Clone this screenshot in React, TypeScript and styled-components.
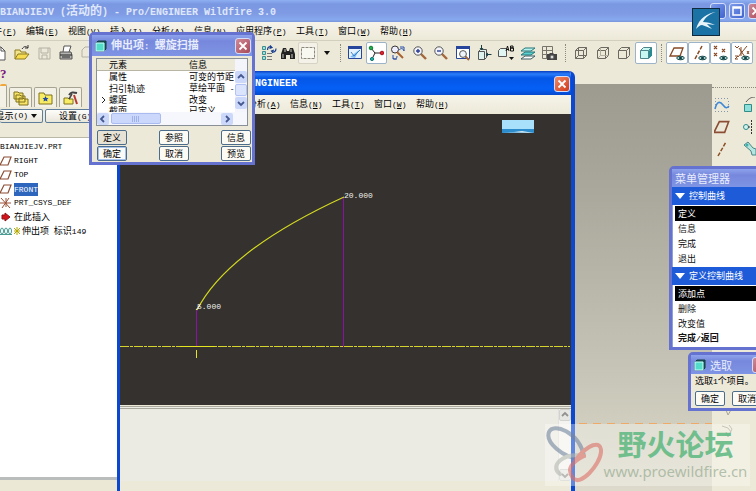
import React from "react";
import styled, { createGlobalStyle, css } from "styled-components";

const cjk = `"Noto Sans CJK SC", sans-serif`;
const mono = `"Liberation Mono", "Noto Sans CJK SC", monospace`;

const GlobalStyle = createGlobalStyle`
  * { box-sizing: border-box; }
  body { margin: 0; overflow: hidden; background: #ece9d8; }
  button { font: inherit; color: inherit; padding: 0; margin: 0; border: 0; background: none; }
  ul { list-style: none; margin: 0; padding: 0; }
  svg { display: block; flex: none; }
`;

/* ---------- text ---------- */

const Latin = styled.span<{ $size: number }>`
  font-family: ${mono};
  font-size: ${(p) => p.$size}px;
`;

const Txt = ({ children, size = 8 }: { children: string; size?: number }) => (
  <>
    {children.split(/([\x20-\x7e]+)/).map((part, i) =>
      i % 2 ? (
        <Latin key={i} $size={size}>
          {part}
        </Latin>
      ) : (
        part
      )
    )}
  </>
);

/* ---------- application frame ---------- */

const App_ = styled.div`
  position: relative;
  display: flex;
  flex-direction: column;
  height: 100vh;
  overflow: hidden;
  background: #ece9d8;
  font: 9px/12px ${cjk};
  color: #000;
  white-space: pre;
`;

const TitleBar = styled.header`
  display: flex;
  align-items: center;
  justify-content: space-between;
  height: 22px;
  flex: none;
  background: linear-gradient(#8fb0f2, #7a97e2 4px, #7f9be4 14px, #86a9ee 20px, #7892d8);
  color: #dfe7fb;
  font-size: 12px;
  font-weight: bold;
`;

const WindowButtons = styled.div`
  display: flex;
  gap: 3px;
  margin-right: -8px;
`;

const frameColors = {
  blue: "linear-gradient(135deg, #7d9bea, #3f63d0)",
  rose: "linear-gradient(135deg, #d08a98, #a84858)",
  red: "linear-gradient(135deg, #f08a68, #d23a18)",
};

const WinButton = styled.button<{ $tone: keyof typeof frameColors }>`
  display: flex;
  align-items: center;
  justify-content: center;
  width: 16px;
  height: 16px;
  flex: none;
  border: 1px solid #d5def8;
  border-radius: 3px;
  background: ${(p) => frameColors[p.$tone]};
`;

const MenuBar = styled.nav<{ $inset: number }>`
  display: flex;
  align-items: center;
  height: 18px;
  flex: none;
  padding-left: ${(p) => p.$inset}px;
  background: linear-gradient(#f6f4ea, #ece9d8);
`;

const MainMenu = styled(MenuBar)`
  margin-left: -16px;
`;

const GraphMenu = styled(MenuBar)`
  height: 19px;
`;

const MenuItem = styled.button<{ $wide?: boolean }>`
  width: ${(p) => (p.$wide ? 60 : 42)}px;
  flex: none;
  text-align: left;
`;

const Key = styled.u`
  text-underline-offset: 1px;
`;

const menuEntry = (label: string, key: string, wide = false) => (
  <MenuItem key={label} $wide={wide}>
    {label}
    <Latin $size={8}>
      (<Key>{key}</Key>)
    </Latin>
  </MenuItem>
);

const ToolBar = styled.div`
  display: grid;
  grid-template-columns: 259px 78px 7px 216px 10px 87px 9px 87px;
  align-items: center;
  height: 24px;
  flex: none;
  border-top: 1px solid #d2cfbe;
`;

const ToolGroup = styled.div<{ $size?: number }>`
  display: grid;
  grid-auto-flow: column;
  grid-auto-columns: ${(p) => (p.$size ? p.$size + "px" : "1fr")};
  align-items: center;
`;

const FileGroup = styled(ToolGroup)`
  margin-left: -11px;
`;

const Tool = styled.button<{ $on?: boolean }>`
  display: flex;
  align-items: center;
  justify-content: center;
  height: 22px;
  min-width: 0;
  border-radius: 2px;
  ${(p) =>
    p.$on &&
    css`
      background: #fff;
      border: 1px solid #9db3c8;
    `}
`;

const MarqueeTool = styled(Tool)`
  background: #f3f1e8;
  border: 1px solid #d6d3c4;
`;

const Grip = styled.div`
  justify-self: center;
  width: 0;
  height: 18px;
  border-left: 1px dotted #8c8a7c;
`;

const HelpRow = styled.div`
  display: flex;
  align-items: center;
  height: 20px;
  flex: none;
  color: #7b1481;
  font: bold 13px/16px "Liberation Serif", serif;
`;

const Workspace = styled.main`
  display: grid;
  grid-template-columns: 117px 1fr 44px;
  flex: 1;
  min-height: 0;
`;

/* ---------- model tree ---------- */

const Navigator = styled.aside`
  display: flex;
  flex-direction: column;
  min-width: 0;
`;

const Tabs = styled.div`
  display: flex;
  align-items: flex-end;
  gap: 2px;
  height: 23px;
  flex: none;
`;

const Tab = styled.button<{ $active?: boolean }>`
  display: flex;
  align-items: center;
  justify-content: center;
  width: ${(p) => (p.$active ? 7 : 23)}px;
  height: ${(p) => (p.$active ? 23 : 20)}px;
  border: 1px solid #a5a394;
  border-bottom: 0;
  border-radius: 2px 2px 0 0;
  background: #f3f1e6;
  ${(p) =>
    p.$active &&
    css`
      border-left: 0;
      border-top: 2px solid #f0a63a;
    `}
`;

const NavButtons = styled.div`
  display: flex;
  gap: 2px;
  padding-top: 2px;
  height: 30px;
  flex: none;
`;

const NavButton = styled.button<{ $first?: boolean }>`
  display: flex;
  align-items: center;
  gap: 3px;
  width: ${(p) => (p.$first ? 43 : 60)}px;
  height: 14px;
  padding-left: ${(p) => (p.$first ? 0 : 13)}px;
  border: 1px solid #5e7d9a;
  border-radius: 2px;
  background: linear-gradient(#fdfdfa, #e9e6da);
  ${(p) => p.$first && css`border-left: 0;`}
`;

const Clip = styled.span`
  display: flex;
  justify-content: flex-end;
  width: 28px;
  overflow: hidden;
`;

const Tree = styled.ul`
  flex: 1;
  && { padding-top: 2px; }
  border-top: 1px solid #b9b7a8;
  border-bottom: 3px solid #b9bdbb;
  background: #fff;
`;

const TreeRow = styled.li`
  display: flex;
  align-items: center;
  height: 14px;
  gap: 2px;
`;

const Selected = styled.span`
  background: #2f66bd;
  color: #fff;
`;

const NavFooter = styled.div`
  height: 11px;
  flex: none;
  background: #ece8d6;
`;

/* ---------- main viewport ---------- */

const Viewport = styled.section`
  display: flex;
  flex-direction: column;
  background: linear-gradient(#9d9b90, #a9a79b 25%, #c6c4b6 70%, #dddacb);
`;

const Datum = styled.div`
  height: 1px;
  flex: none;
  margin-top: 339px;
  background: repeating-linear-gradient(90deg, #eeaa66 0 8px, transparent 8px 14px);
`;

const SideTools = styled.aside`
  padding-top: 3px;
  background: #ece9d8;
`;

const SideGrid = styled.div`
  display: grid;
  grid-template-columns: 20px 20px;
  grid-auto-rows: 22px;
  column-gap: 9px;
  align-items: center;
  border-top: 1px dotted #8c8a7c;
  padding-top: 6px;
`;

const LowerTools = styled.div`
  display: flex;
  flex-direction: column;
  gap: 8px;
  padding: 242px 0 0 9px;
`;

/* ---------- graph window ---------- */

const GraphWindow = styled.section`
  position: absolute;
  top: 71px;
  bottom: 0;
  left: 117px;
  width: 458px;
  display: flex;
  flex-direction: column;
  border: solid #0b47cf;
  border-width: 0 4px 0 3px;
  border-radius: 6px 6px 0 0;
  background: #ece9d8;
  overflow: hidden;
`;

const GraphTitle = styled.header`
  display: flex;
  align-items: center;
  justify-content: space-between;
  height: 24px;
  flex: none;
  padding: 2px 1px 0 105px;
  background: linear-gradient(#0a3fc0, #2a7dfa 3px, #0556e6 7px, #0560f6 18px, #0648cc);
  color: #fff;
  font: bold 10px/12px ${mono};
`;

const Canvas = styled.div`
  height: 291px;
  flex: none;
  background: #34312e;
`;

const PlotText = styled.text`
  fill: #f0f0ea;
  font: 8px ${mono};
`;

const Messages = styled.div`
  display: flex;
  justify-content: flex-end;
  height: 75px;
  flex: none;
  margin-top: 1px;
  border-top: 3px double #aaa79d;
  background: #ebeae3;
`;

const FadedScroll = styled.div`
  display: flex;
  flex-direction: column;
  justify-content: space-between;
  width: 13px;
  background: #fbfaf7;
  border-left: 1px solid #dddbd0;
  filter: grayscale(1);
  opacity: 0.6;
`;

/* ---------- floating tool dialogs ---------- */

const Dialog = styled.section`
  position: absolute;
  display: flex;
  flex-direction: column;
  border: 3px solid #6672cf;
  border-radius: 5px 5px 0 0;
  background: #ece9d8;
`;

const ElementDialog = styled(Dialog)`
  left: 89px;
  top: 32px;
  width: 166px;
`;

const MenuManager = styled(Dialog)`
  left: calc(100vw - 87px);
  top: 166px;
  width: 120px;
`;

const SelectDialog = styled(Dialog)`
  left: calc(100vw - 68px);
  top: 352px;
  width: 84px;
`;

const DialogTitle = styled.header<{ $h: number }>`
  display: flex;
  align-items: center;
  gap: 4px;
  height: ${(p) => p.$h}px;
  padding-left: 3px;
  background: linear-gradient(#8da3ec, #7788dc 6px, #7e94e4);
  color: #e8edfc;
  & > button { margin-left: auto; margin-right: 1px; }
`;

const TitleText = styled.span<{ $bold?: boolean }>`
  font-size: 11px;
  font-weight: ${(p) => (p.$bold ? "bold" : "normal")};
`;

const ListFrame = styled.div`
  margin: 2px 4px 0;
  height: 68px;
  border: 1px solid #8a9097;
  background: #fff;
`;

const ListBody = styled.div`
  display: grid;
  grid-template-columns: 1fr 12px;
  height: 53px;
`;

const TableClip = styled.div`
  overflow: hidden;
`;

const Elements = styled.table`
  border-collapse: collapse;
  table-layout: fixed;
  width: 150px;
  line-height: 11px;
  th, td { padding: 0; text-align: left; font-weight: normal; height: 11px; }
  th { background: #ece9d8; border-bottom: 1px solid #b8b5a5; }
  tr > :first-child { width: 12px; }
  tr > :nth-child(2) { width: 80px; }
  td:first-child svg { margin-left: 2px; }
`;

const VScroll = styled.div`
  display: flex;
  flex-direction: column;
  gap: 1px;
  padding-top: 12px;
  background: #f4f4fb;
`;

const HScroll = styled.div`
  display: flex;
  align-items: center;
  gap: 2px;
  height: 13px;
  padding-right: 14px;
  background: #f6f7fc;
`;

const ScrollKey = styled.button<{ $fill?: boolean }>`
  display: flex;
  align-items: center;
  justify-content: center;
  width: 12px;
  height: 12px;
  border-radius: 2px;
  background: #ccd8fa;
  ${(p) => p.$fill && css`background: #dbe4fd; border: 1px solid #b3c3f4;`}
`;

const HThumb = styled.div`
  display: flex;
  align-items: center;
  justify-content: center;
  width: 50px;
  height: 11px;
  margin-right: auto;
  border: 1px solid #a9bbf0;
  border-radius: 2px;
  background: #ccd8fb;
`;

const ButtonGrid = styled.div`
  display: grid;
  grid-template-columns: repeat(3, 30px);
  justify-content: space-between;
  row-gap: 1px;
  padding: 4px 1px 1px 5px;
`;

const PushButton = styled.button<{ $primary?: boolean; $flat?: boolean }>`
  width: 30px;
  height: 15px;
  flex: none;
  border: 1px solid #4c6c8c;
  border-radius: 2px;
  background: ${(p) => (p.$flat ? "#e6e3d6" : "#fbfaf5")};
  line-height: 12px;
  ${(p) => p.$primary && css`box-shadow: inset 0 0 0 1px #a5c3ee;`}
`;

const Section = styled.h2`
  display: flex;
  align-items: center;
  gap: 4px;
  height: 18px;
  margin: 0;
  padding-left: 3px;
  background: #1e5bd8;
  color: #fff;
  font: 9px/12px ${cjk};
`;

const Choices = styled.div`
  display: flex;
  flex-direction: column;
  height: 62px;
  padding: 1px 0 0 2px;
  border-left: 1px solid #8ea0d8;
  background: #fff;
`;

const Choice = styled.button<{ $on?: boolean; $strong?: boolean }>`
  height: 15px;
  padding-left: 3px;
  text-align: left;
  background: ${(p) => (p.$on ? "#000" : "transparent")};
  color: ${(p) => (p.$on ? "#fff" : "#111")};
  font-weight: ${(p) => (p.$strong ? "bold" : "normal")};
`;

const SelectBody = styled.div`
  display: flex;
  flex-wrap: wrap;
  gap: 3px 7px;
  width: 84px;
  padding: 1px 0 2px 4px;
`;

const Prompt = styled.p`
  width: 100%;
  margin: 0;
`;

/* ---------- overlays ---------- */

const Bird = styled.div`
  position: absolute;
  right: 36px;
  top: 8px;
  width: 28px;
  height: 28px;
  border: 1px solid #0e2a3c;
  background: #1b73a5;
`;

const Watermark = styled.div`
  position: absolute;
  right: 6px;
  bottom: 5px;
  display: flex;
  width: 205px;
  height: 62px;
  background: rgba(255, 255, 250, 0.35);
`;

const Brand = styled.div`
  display: flex;
  flex-direction: column;
  align-items: center;
  width: 145px;
`;

const BrandName = styled.strong`
  color: rgba(92, 184, 128, 0.85);
  font: bold 29px/38px ${cjk};
`;

const BrandUrl = styled.a`
  color: rgba(150, 170, 145, 0.7);
  font: 15px/18px "Noto Sans", sans-serif;
  text-decoration: none;
`;

/* ---------- icons ---------- */

const Icon = ({ children, w = 16, h = 16 }: { children: React.ReactNode; w?: number; h?: number }) => (
  <svg width={w} height={h} viewBox={`0 0 ${w} ${h}`} fill="none" stroke="#555" strokeWidth="1">
    {children}
  </svg>
);

const Cross = () => (
  <Icon w={10} h={10}>
    <path d="M1.5 1.5l7 7M8.5 1.5l-7 7" stroke="#fff" strokeWidth="1.8" />
  </Icon>
);
const DocIcon = () => (
  <Icon>
    <path d="M3 2h6l4 4v9H3z" fill="#fff" />
    <path d="M9 2v4h4" />
  </Icon>
);
const OpenIcon = () => (
  <Icon>
    <path d="M1 14V5h5l1 2h5v2" fill="#f2e48a" stroke="#8d7b1e" />
    <path d="M1 14l3-5h11l-4 5z" fill="#f8dc50" stroke="#8d7b1e" />
    <path d="M8 4c2-3 4-3 6-1M14 0v3h-3" stroke="#333" />
  </Icon>
);
const SaveIcon = () => (
  <Icon>
    <path d="M3 3h11v11H3zM5 3v5h7V3M6 14v-4h5v4" stroke="#b4b1a4" />
  </Icon>
);
const PrintIcon = () => (
  <Icon>
    <path d="M5 7l1-6h7l-2 6" fill="#fff" />
    <path d="M2 7h11l1 3v4H2z" fill="#b4b4b0" />
    <path d="M2 10h12M4 12h8" stroke="#222" />
  </Icon>
);
const FaintIcon = () => (
  <Icon>
    <path d="M2 12V5l3-3h8v10z" stroke="#b4b1a4" />
  </Icon>
);
const RegenIcon = () => (
  <Icon>
    <path d="M1.5 1.5h3v3h-3zM1.5 6.5h3v3h-3zM1.5 11.500h3v3h-3z" fill="#9fe0d8" stroke="#3f8f90" />
    <path d="M6 8.500h5M6 11.500h5M6 14.500h5" stroke="#777" />
    <path d="M6.500 5c0-3 2-4 4-2.500M15 3.500c0 3-2 4-4 3M9 .5l2 2-2.500 1M12 8l-1.500-2 2.500-1" stroke="#173d91" strokeWidth="1.2" />
  </Icon>
);
const BinocularIcon = () => (
  <Icon>
    <path d="M1 14V9l2-6h3l1 3h2l1-3h3l2 6v5h-5v-4H6v4z" fill="#222" stroke="none" />
    <path d="M3 13V9M5 4v3M12 13V9M11 4v3" stroke="#c8c8c0" />
  </Icon>
);
const MarqueeIcon = () => (
  <Icon>
    <path d="M1.5 2.5h13v11h-13z" fill="#f8f7f0" stroke="#8b897c" strokeDasharray="3 1" />
  </Icon>
);
const ArrowIcon = () => (
  <Icon w={6} h={4}>
    <path d="M0 0h6L3 4z" fill="#111" stroke="none" />
  </Icon>
);
const RepaintIcon = () => (
  <Icon>
    <path d="M1.5 1.500h13v12h-13z" fill="#e4f1ff" stroke="#27459b" />
    <path d="M1 2.5h14" stroke="#27459b" strokeWidth="3" />
    <path d="M3 12l9-7-4 8z" fill="#7dbcf2" stroke="none" />
    <path d="M4 7l3 4 6-6" stroke="#3c82c8" />
  </Icon>
);
const SpinIcon = () => (
  <Icon>
    <path d="M3 3l4 5-3 6M7 8h7" stroke="#222" />
    <circle cx="3" cy="3" r="1.8" fill="#1fae4c" stroke="#0f7c33" />
    <circle cx="4" cy="14" r="1.6" fill="#20b4a8" stroke="#0c7c76" />
    <circle cx="14" cy="8" r="1.8" fill="#e0202c" stroke="#a40f1c" />
  </Icon>
);
const OrientIcon = () => (
  <Icon>
    <circle cx="5" cy="4.500" r="3.500" fill="#eef" stroke="#333" />
    <path d="M7 7l6 6" stroke="#a8622f" strokeWidth="2" />
    <path d="M10 2h4v4M9 5c2-2 4-2 5 1M3 10v4h4M3 13c2 2 4 1 4-2" stroke="#274da8" />
  </Icon>
);
const Zoom = ({ plus }: { plus?: boolean }) => (
  <Icon>
    <path d="M9 9l5 5" stroke="#a4673c" strokeWidth="2.4" />
    <circle cx="6" cy="6" r="4.2" fill="#f3f4fb" stroke="#555" />
    <path d={plus ? "M4 6h4M6 4v4" : "M4 6h4"} stroke="#2c3b92" strokeWidth="1.4" />
  </Icon>
);
const RefitIcon = () => (
  <Icon>
    <path d="M1.500 1.500h13v12h-13z" fill="#fff" stroke="#27459b" />
    <path d="M1 2.500h14" stroke="#27459b" strokeWidth="3" />
    <path d="M10 11l4 4" stroke="#a4673c" strokeWidth="2" />
    <circle cx="8" cy="9" r="3.4" fill="#eef4fb" stroke="#555" />
  </Icon>
);
const ViewIcon = () => (
  <Icon>
    <path d="M2.500 6.500h6v8h-6zM2.500 6.500l2-2h6v8l-2 2" fill="#dff3ef" />
    <path d="M5.500 0v5M4 3l1.500 2L7 3M15.500 9.500H10M12 8l-2 1.500 2 1.500" stroke="#173f45" />
  </Icon>
);
const NamedIcon = () => (
  <Icon>
    <path d="M.5 5.500l2-2h6v8h-8z" fill="#e1f5f2" />
    <path d="M8 6l1.500-5L11 6M8.500 4.500h2M12.500 1h2.500v2h-2.500zM12.500 3h3v3h-3V1" stroke="#111" />
    <path d="M11 12h5l-2.500 3z" fill="#111" stroke="none" />
  </Icon>
);
const LayersIcon = () => (
  <Icon>
    <path d="M1 14l4-3h10l-4 3z" fill="#fff" stroke="#3b5b60" />
    <path d="M1 10l4-3h10l-4 3z" fill="#5ad0d0" stroke="#25777a" />
    <path d="M1 6l4-3h10l-4 3z" fill="#b8f2ee" stroke="#25777a" />
  </Icon>
);
const TableIcon = () => (
  <Icon>
    <path d="M1.500 1.500h10v12h-10zM1 5.500h11M1 9.500h11M5.500 1v12" stroke="#77756b" />
    <path d="M6 9h2l1-1h3l1 1h3v6H6z" fill="#444" stroke="none" />
    <circle cx="11" cy="12" r="2" fill="#ddd" />
  </Icon>
);
const Cube = ({ mode }: { mode: "wire" | "hidden" | "none" | "shade" }) => (
  <Icon>
    <path
      d="M2.500 5.500l3-3h8v8l-3 3h-8zM2.500 5.500h8v8M10.500 5.500l3-3"
      fill={mode === "shade" ? "#c8f6f0" : "none"}
      stroke={mode === "shade" ? "#4d8589" : "#6c6a60"}
    />
    {mode === "shade" && <path d="M11 5.500l3-3v8l-3 3z" fill="#278b91" stroke="none" />}
    {mode === "wire" && <path d="M5.500 2.500v8h8M5.500 10.500l-3 3" stroke="#6c6a60" />}
    {mode === "hidden" && <path d="M5.500 2.500v8h8M5.500 10.500l-3 3" stroke="#b1aea0" />}
  </Icon>
);
const Datums = ({ kind }: { kind: "plane" | "axis" | "point" | "csys" }) => (
  <Icon>
    {kind === "plane" && <path d="M1 11l4-8h9l-3 8z" stroke="#874a24" strokeWidth="1.3" />}
    {kind === "axis" && <path d="M4 14L11 1" stroke="#874a24" strokeWidth="1.5" strokeDasharray="4 1.500" />}
    {kind === "point" && (
      <path d="M2 1l3 3M5 1L2 4M10 4l3 3M13 4l-3 3M2 8l3 3M5 8l-3 3" stroke="#874a24" strokeWidth="1.2" />
    )}
    {kind === "csys" && (
      <path d="M5 3l6 9M13 1L4 12M7 2v9M1 1l2 2 2-2M13 6l2 3M15 6l-2 3M1 11h3l-3 3h3" stroke="#874a24" />
    )}
    <ellipse cx="11.500" cy="13" rx="3.800" ry="1.800" fill="#a9d4d0" stroke="#1e4d4d" />
    <circle cx="11.500" cy="13" r="1.500" fill="#0d3f42" stroke="none" />
  </Icon>
);
const Plane = ({ w = 12 }: { w?: number }) => (
  <svg width={w} height={w} viewBox="0 0 12 12" fill="none" stroke="#8b4d33" strokeWidth="1.2">
    <path d="M0 10l4-8h7l-3 8z" />
  </svg>
);
const CsysIcon = () => (
  <Icon w={12} h={12}>
    <path d="M1 1l9 10M9 1L2 11M0 6h11M6 1v9" stroke="#9a5136" />
  </Icon>
);
const RedArrow = () => (
  <Icon w={12} h={12}>
    <path d="M2 4h3V2l5 4-5 4V8H2z" fill="#d3141c" stroke="#901015" />
  </Icon>
);
const HelixIcon = () => (
  <Icon w={12} h={12}>
    <path d="M0 9.500h12" stroke="#4a9a92" />
    <ellipse cx="2" cy="6" rx="1.500" ry="3" stroke="#4a9a92" />
    <ellipse cx="6" cy="6" rx="1.500" ry="3" stroke="#4a9a92" />
    <ellipse cx="10" cy="6" rx="1.500" ry="3" stroke="#4a9a92" />
  </Icon>
);
const SparkIcon = () => (
  <Icon w={6} h={8}>
    <path d="M0 1l6 6M6 1L0 7M3 0v8M0 4h6" stroke="#b4a800" />
  </Icon>
);
const FoldersIcon = () => (
  <Icon>
    <path d="M1 2h4l1 1h4v6H1zM3 5h4l1 1h4v6H3zM6 8h4l1 1h4v6H6z" fill="#f6e468" stroke="#80701c" />
  </Icon>
);
const FavIcon = () => (
  <Icon>
    <path d="M1 3h5l1 2h7v9H1z" fill="#f8ec64" stroke="#80701c" />
    <path d="M7.500 6l1 2h2l-1.500 1.500.5 2-2-1-2 1 .5-2L4.500 8h2z" fill="#234aa0" stroke="none" />
  </Icon>
);
const ToolsIcon = () => (
  <Icon>
    <path d="M1 8h4l1 1h4v5H1z" fill="#f8ec64" stroke="#80701c" />
    <path d="M6 5c2-3 4-3 8-2" stroke="#444" strokeWidth="2" />
    <path d="M9 4L6 9" stroke="#444" strokeWidth="1.500" />
    <path d="M11 5l3 9" stroke="#b93a2c" strokeWidth="2" />
  </Icon>
);
const BoxIcon = () => (
  <Icon w={12} h={12}>
    <path d="M1 3l2-2h8v8l-2 2H1z" fill="#17575c" stroke="#123b40" />
    <path d="M1 3h8v8H1z" fill="#54dccb" stroke="#c9fff6" />
  </Icon>
);
const Chevron = ({ d, thin }: { d: "up" | "down" | "left" | "right"; thin?: boolean }) => {
  const paths = { up: "M1 5l3-3 3 3", down: "M1 3l3 3 3-3", left: "M5 1L2 4l3 3", right: "M3 1l3 3-3 3" };
  return (
    <Icon w={8} h={8}>
      <path d={paths[d]} stroke={thin ? "#222" : "#43598f"} strokeWidth={thin ? "1" : "1.8"} />
    </Icon>
  );
};
const SectionArrow = () => (
  <Icon w={10} h={6}>
    <path d="M0 0h10L5 6z" fill="#fff" stroke="none" />
  </Icon>
);
const CurveIcon = () => (
  <Icon>
    <path d="M1 1.500h14M1 14.500h14M1.500 4v9M14.500 4v9" stroke="#8797aa" strokeDasharray="1 2" />
    <path d="M1 12c2-8 5-8 8-4s4 3 6 1" stroke="#3f87d6" strokeWidth="1.6" />
  </Icon>
);
const AxisIcon = () => (
  <Icon>
    <path d="M4 15L12 1" stroke="#8b4d23" strokeWidth="1.5" strokeDasharray="4 1.500" />
  </Icon>
);
const DragIcon = () => (
  <Icon>
    <path d="M1.500 7.500h7v7h-7z" fill="#8fe0da" stroke="#2f8c89" />
    <path d="M3 5c3-4 6-5 9-5" stroke="#555" />
  </Icon>
);
const MirrorIcon = () => (
  <Icon>
    <circle cx="3" cy="8" r="2.500" fill="#d4f3ef" stroke="#2f8c89" />
    <path d="M5 8h4M8.500 1v14" stroke="#333" strokeDasharray="2 1" />
  </Icon>
);
const MoveIcon = () => (
  <Icon>
    <path d="M1 4l4-3 5 6 3 1v6H9l-1-4z" fill="#b4e6e0" stroke="#4d8589" />
    <circle cx="4" cy="4" r="1.500" fill="#3fb0a8" stroke="none" />
  </Icon>
);
const GhostIcon = () => (
  <Icon w={14} h={14}>
    <path d="M1 2l6 2 3 4-3 5-2-5M8 1l3 4-2 4" stroke="#a9a698" />
  </Icon>
);

const Plot = () => (
  <svg width="450" height="291" viewBox="0 0 450 291" fill="none">
    <path d="M382 6h32v13h-32z" fill="#a8e0fb" />
    <path d="M382 15h32v4h-32z" fill="#2d8ccb" />
    <path d="M382 18h12l8-1 12 2z" fill="#d7eaf4" />
    <path d="M76 196h1v37h-1zM223 83h1v150h-1z" fill="#8c12a6" />
    <path d="M0 232.500h450" stroke="#d6d42c" strokeDasharray="9 1 3 1" />
    <path d="M60 232.500h35M76.500 236v8" stroke="#e6e620" />
    <path d="M77 196C98 155 148 118 224 83" stroke="#d2d820" strokeWidth="1.200" />
    <path d="M76 196l4-5" stroke="#f0f0ea" />
    <PlotText x="224" y="84">20.000</PlotText>
    <PlotText x="77" y="195">5.000</PlotText>
  </svg>
);

/* ---------- data ---------- */

const mainMenu: [string, string, boolean?][] = [
  ["文件", "F"], ["编辑", "E"], ["视图", "V"], ["插入", "I"], ["分析", "A"],
  ["信息", "N"], ["应用程序", "P", true], ["工具", "T"], ["窗口", "W"], ["帮助", "H"],
];
const graphMenu: [string, string][] = [
  ["文件", "F"], ["编辑", "E"], ["视图", "V"], ["分析", "A"], ["信息", "N"], ["工具", "T"], ["窗口", "W"], ["帮助", "H"],
];
const elements = [["属性", "可变的节距"], ["扫引轨迹", "草绘平面 -"], ["螺距", "改变"], ["截面", "已定义"]];

export default function App() {
  return (
    <App_ lang="zh-CN">
      <GlobalStyle />
      <TitleBar>
        <span><Txt size={10}>BIANJIEJV (活动的) - Pro/ENGINEER Wildfire 3.0</Txt></span>
        <WindowButtons>
          <WinButton $tone="blue" aria-label="最小化">
            <Icon w={10} h={10}><path d="M1 8h5" stroke="#fff" strokeWidth="2" /></Icon>
          </WinButton>
          <WinButton $tone="blue" aria-label="最大化">
            <Icon w={10} h={10}><path d="M1 1h8v8H1zM1 2h8" stroke="#fff" strokeWidth="1.500" /></Icon>
          </WinButton>
          <WinButton $tone="rose" aria-label="关闭"><Cross /></WinButton>
        </WindowButtons>
      </TitleBar>
      <MainMenu $inset={0}>{mainMenu.map(([l, k, w]) => menuEntry(l, k, w))}</MainMenu>
      <ToolBar>
        <FileGroup $size={22}>
          <Tool aria-label="新建"><DocIcon /></Tool>
          <Tool aria-label="打开"><OpenIcon /></Tool>
          <Tool aria-label="保存"><SaveIcon /></Tool>
          <Tool aria-label="打印"><PrintIcon /></Tool>
          <Tool aria-label="复制"><FaintIcon /></Tool>
        </FileGroup>
        <ToolGroup>
          <Tool aria-label="再生"><RegenIcon /></Tool>
          <Tool aria-label="查找"><BinocularIcon /></Tool>
          <MarqueeTool aria-label="框选"><MarqueeIcon /></MarqueeTool>
          <Tool aria-label="更多"><ArrowIcon /></Tool>
        </ToolGroup>
        <Grip />
        <ToolGroup>
          <Tool aria-label="重画"><RepaintIcon /></Tool>
          <Tool $on aria-label="旋转中心"><SpinIcon /></Tool>
          <Tool aria-label="定向模式"><OrientIcon /></Tool>
          <Tool aria-label="放大"><Zoom plus /></Tool>
          <Tool aria-label="缩小"><Zoom /></Tool>
          <Tool aria-label="重新调整"><RefitIcon /></Tool>
          <Tool aria-label="重定向"><ViewIcon /></Tool>
          <Tool aria-label="视图列表"><NamedIcon /></Tool>
          <Tool aria-label="图层"><LayersIcon /></Tool>
          <Tool aria-label="视图管理器"><TableIcon /></Tool>
        </ToolGroup>
        <Grip />
        <ToolGroup>
          <Tool aria-label="线框"><Cube mode="wire" /></Tool>
          <Tool aria-label="隐藏线"><Cube mode="hidden" /></Tool>
          <Tool aria-label="无隐藏线"><Cube mode="none" /></Tool>
          <Tool $on aria-label="着色"><Cube mode="shade" /></Tool>
        </ToolGroup>
        <Grip />
        <ToolGroup>
          <Tool $on aria-label="基准平面"><Datums kind="plane" /></Tool>
          <Tool $on aria-label="基准轴"><Datums kind="axis" /></Tool>
          <Tool $on aria-label="基准点"><Datums kind="point" /></Tool>
          <Tool $on aria-label="坐标系"><Datums kind="csys" /></Tool>
        </ToolGroup>
      </ToolBar>
      <HelpRow>?</HelpRow>

      <Workspace>
        <Navigator>
          <Tabs>
            <Tab $active aria-label="模型树" />
            <Tab aria-label="文件夹"><FoldersIcon /></Tab>
            <Tab aria-label="收藏夹"><FavIcon /></Tab>
            <Tab aria-label="连接"><ToolsIcon /></Tab>
          </Tabs>
          <NavButtons>
            <NavButton $first><Clip><Txt>显示(O)</Txt></Clip><ArrowIcon /></NavButton>
            <NavButton><span><Txt>设置(G)</Txt></span></NavButton>
          </NavButtons>
          <Tree>
            <TreeRow><Txt>BIANJIEJV.PRT</Txt></TreeRow>
            <TreeRow><Plane /><Txt>RIGHT</Txt></TreeRow>
            <TreeRow><Plane /><Txt>TOP</Txt></TreeRow>
            <TreeRow><Plane /><Selected><Txt>FRONT</Txt></Selected></TreeRow>
            <TreeRow><CsysIcon /><Txt>PRT_CSYS_DEF</Txt></TreeRow>
            <TreeRow><RedArrow />在此插入</TreeRow>
            <TreeRow><HelixIcon /><SparkIcon /><span><Txt>伸出项 标识149</Txt></span></TreeRow>
          </Tree>
          <NavFooter />
        </Navigator>
        <Viewport><Datum /></Viewport>
        <SideTools>
          <SideGrid>
            <Tool aria-label="草绘"><CurveIcon /></Tool><Tool aria-label="拖动"><DragIcon /></Tool>
            <Tool aria-label="平面"><Plane w={16} /></Tool><Tool aria-label="镜像"><MirrorIcon /></Tool>
            <Tool aria-label="轴"><AxisIcon /></Tool><Tool aria-label="移动"><MoveIcon /></Tool>
          </SideGrid>
          <LowerTools><GhostIcon /><GhostIcon /></LowerTools>
        </SideTools>
      </Workspace>

      <GraphWindow>
        <GraphTitle>
          Pro/ENGINEER
          <WinButton $tone="red" aria-label="关闭"><Cross /></WinButton>
        </GraphTitle>
        <GraphMenu $inset={2}>{graphMenu.map(([l, k]) => menuEntry(l, k))}</GraphMenu>
        <Canvas><Plot /></Canvas>
        <Messages>
          <FadedScroll>
            <ScrollKey $fill aria-label="向上"><Chevron d="up" /></ScrollKey>
            <ScrollKey $fill aria-label="向下"><Chevron d="down" /></ScrollKey>
          </FadedScroll>
        </Messages>
      </GraphWindow>

      <ElementDialog>
        <DialogTitle $h={21}>
          <BoxIcon />
          <TitleText $bold><Txt size={9}>伸出项: 螺旋扫描</Txt></TitleText>
          <WinButton $tone="rose" aria-label="关闭"><Cross /></WinButton>
        </DialogTitle>
        <ListFrame>
          <ListBody>
            <TableClip>
              <Elements>
                <thead><tr><th /><th>元素</th><th>信息</th></tr></thead>
                <tbody>
                  {elements.map(([name, info]) => (
                    <tr key={name}>
                      <td>{name === "螺距" && <Chevron d="right" thin />}</td>
                      <td>{name}</td>
                      <td><Txt>{info}</Txt></td>
                    </tr>
                  ))}
                </tbody>
              </Elements>
            </TableClip>
            <VScroll>
              <ScrollKey aria-label="向上"><Chevron d="up" /></ScrollKey>
              <ScrollKey $fill aria-label="滑块" />
              <ScrollKey aria-label="向下"><Chevron d="down" /></ScrollKey>
            </VScroll>
          </ListBody>
          <HScroll>
            <ScrollKey aria-label="向左"><Chevron d="left" /></ScrollKey>
            <HThumb><Icon w={8} h={6}><path d="M.5 0v6M2.500 0v6M4.500 0v6M6.500 0v6" stroke="#9fb2ea" /></Icon></HThumb>
            <ScrollKey aria-label="向右"><Chevron d="right" /></ScrollKey>
          </HScroll>
        </ListFrame>
        <ButtonGrid>
          <PushButton $flat>定义</PushButton>
          <PushButton>参照</PushButton>
          <PushButton>信息</PushButton>
          <PushButton $primary>确定</PushButton>
          <PushButton>取消</PushButton>
          <PushButton>预览</PushButton>
        </ButtonGrid>
      </ElementDialog>

      <MenuManager>
        <DialogTitle $h={18}><TitleText>菜单管理器</TitleText></DialogTitle>
        <Section><SectionArrow />控制曲线</Section>
        <Choices>
          <Choice $on>定义</Choice>
          <Choice>信息</Choice>
          <Choice>完成</Choice>
          <Choice>退出</Choice>
        </Choices>
        <Section><SectionArrow />定义控制曲线</Section>
        <Choices>
          <Choice $on>添加点</Choice>
          <Choice>删除</Choice>
          <Choice>改变值</Choice>
          <Choice $strong><Txt>完成/返回</Txt></Choice>
        </Choices>
      </MenuManager>

      <SelectDialog>
        <DialogTitle $h={19}>
          <BoxIcon />
          <TitleText>选取</TitleText>
          <WinButton $tone="rose" aria-label="关闭"><Cross /></WinButton>
        </DialogTitle>
        <SelectBody>
          <Prompt><Txt>选取1个项目。</Txt></Prompt>
          <PushButton>确定</PushButton>
          <PushButton>取消</PushButton>
        </SelectBody>
      </SelectDialog>

      <Bird>
        <Icon w={26} h={26}>
          <path d="M23 3C15 4 6 9 3 20c2-2 4-4 6-4 4 1 7 3 10 4-2-2-4-4-5-5l8 1c-4-2-8-3-12-3 2-4 6-8 13-10z" fill="#e8f4fa" stroke="none" />
        </Icon>
      </Bird>

      <Watermark>
        <svg width="58" height="62" viewBox="0 0 58 62" fill="none" strokeWidth="4" strokeLinecap="round" opacity="0.6">
          <path d="M39 32C34 8 8-2 4 8s14 26 30 26" stroke="#7385a0" />
          <path d="M39 32C18 28 4 42 15 50" stroke="#b3b8b0" />
          <path d="M30 37c12-17 27-22 26-9S35 63 28 54s-1-16 11-22" stroke="#dc7068" />
        </svg>
        <Brand>
          <BrandName>野火论坛</BrandName>
          <BrandUrl href="#">www.proewildfire.cn</BrandUrl>
        </Brand>
      </Watermark>
    </App_>
  );
}
